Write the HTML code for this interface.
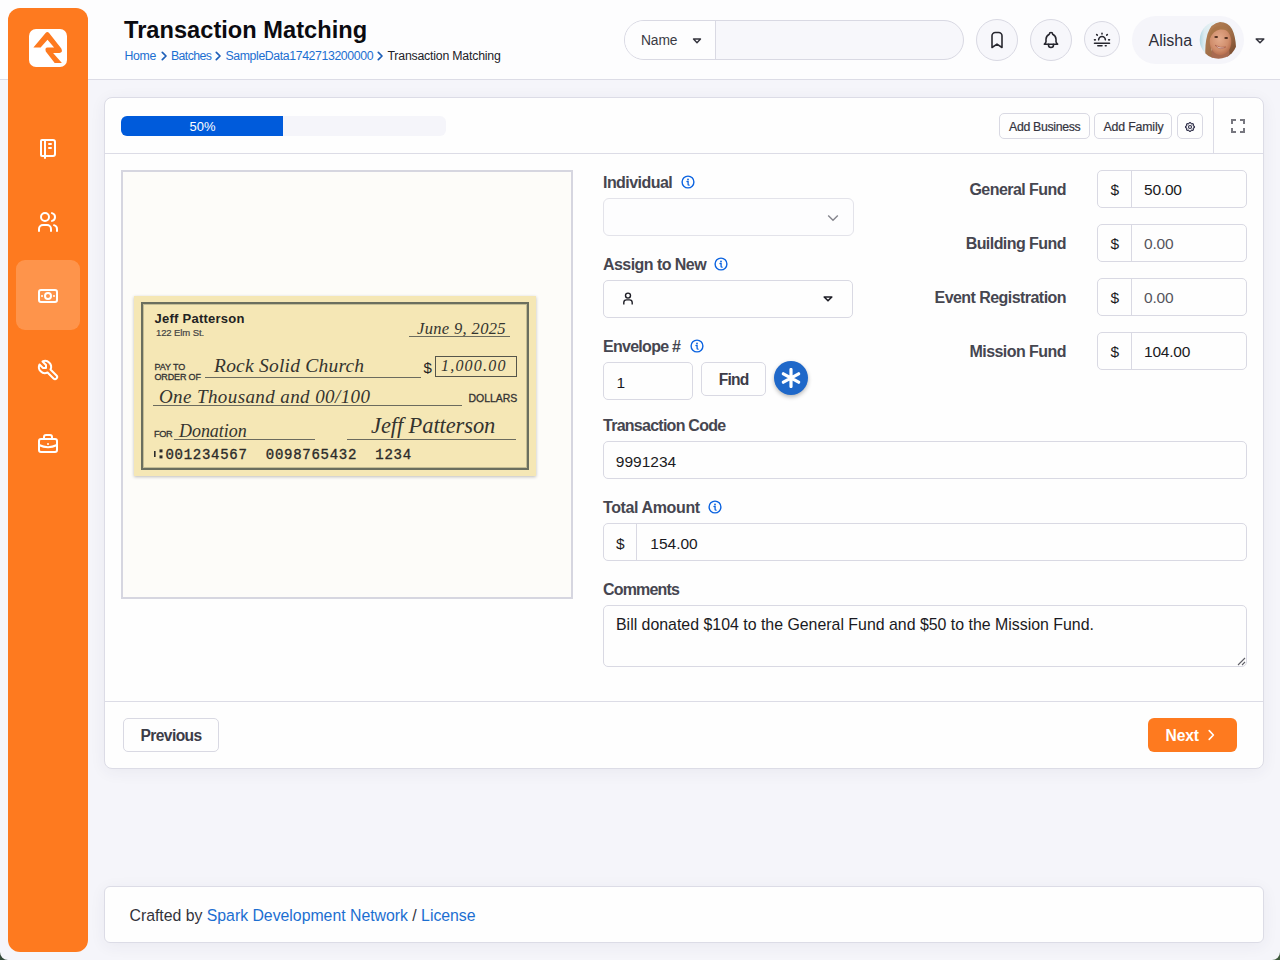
<!DOCTYPE html>
<html><head><meta charset="utf-8"><title>Transaction Matching</title>
<style>
*{box-sizing:border-box;margin:0;padding:0}
html,body{width:1280px;height:960px;overflow:hidden}
body{background:#f5f5fa;font-family:"Liberation Sans",sans-serif;color:#2b2b33;position:relative}
.a{position:absolute}
.t{position:absolute;line-height:1;white-space:nowrap}
</style></head><body>
<div class="a" style="left:0px;top:0px;width:1280px;height:80px;background:#fdfdfe;border-bottom:1px solid #dcdce6"></div>
<div class="a" style="left:8px;top:8px;width:80px;height:944px;background:#fe7a1f;border-radius:12px"></div>
<svg class="a" style="left:29px;top:29px;" width="38" height="38" viewBox="0 0 38 38"><rect width="38" height="38" rx="7" fill="#fff"/><path d="M4.4 18.5H11.6L18.5 10.7L25.1 18.5H18.5Q15.6 18.8 16.8 22.4L25.7 34.1H32.9L24.1 24.1H30.4Q34.2 23.8 32.3 19.6L19.9 3.8Q18.2 2.4 16.8 3.8Z" fill="#fe7a1f"/></svg>
<div class="a" style="left:16px;top:260px;width:64px;height:70px;background:rgba(255,255,255,.2);border-radius:9px"></div>
<svg class="a" style="left:36px;top:136px;" width="24" height="24" viewBox="0 0 24 24"><g fill="none" stroke="#fff" stroke-width="2" stroke-linecap="round" stroke-linejoin="round"><path d="M6 4h11a2 2 0 0 1 2 2v12a2 2 0 0 1 -2 2h-11a1 1 0 0 1 -1 -1v-14a1 1 0 0 1 1 -1m3 0v18"/><path d="M13 8l2 0M13 12l2 0"/></g></svg>
<svg class="a" style="left:36px;top:209.5px;" width="24" height="24" viewBox="0 0 24 24"><g fill="none" stroke="#fff" stroke-width="2" stroke-linecap="round" stroke-linejoin="round"><path d="M9 7m-4 0a4 4 0 1 0 8 0a4 4 0 1 0 -8 0"/><path d="M3 21v-2a4 4 0 0 1 4 -4h4a4 4 0 0 1 4 4v2"/><path d="M16 3.13a4 4 0 0 1 0 7.75"/><path d="M21 21v-2a4 4 0 0 0 -3 -3.85"/></g></svg>
<svg class="a" style="left:36px;top:283.5px;" width="24" height="24" viewBox="0 0 24 24"><g fill="none" stroke="#fff" stroke-width="2" stroke-linecap="round" stroke-linejoin="round"><path d="M12 12m-3 0a3 3 0 1 0 6 0a3 3 0 1 0 -6 0"/><path d="M3 6m0 2a2 2 0 0 1 2 -2h14a2 2 0 0 1 2 2v8a2 2 0 0 1 -2 2h-14a2 2 0 0 1 -2 -2z"/><path d="M18 12l.01 0M6 12l.01 0"/></g></svg>
<svg class="a" style="left:36px;top:357.5px;" width="24" height="24" viewBox="0 0 24 24"><g fill="none" stroke="#fff" stroke-width="2" stroke-linecap="round" stroke-linejoin="round"><path d="M7 10h3v-3l-3.5 -3.5a6 6 0 0 1 8 8l6 6a2 2 0 0 1 -3 3l-6 -6a6 6 0 0 1 -8 -8l3.5 3.5"/></g></svg>
<svg class="a" style="left:36px;top:431.5px;" width="24" height="24" viewBox="0 0 24 24"><g fill="none" stroke="#fff" stroke-width="2" stroke-linecap="round" stroke-linejoin="round"><path d="M3 7m0 2a2 2 0 0 1 2 -2h14a2 2 0 0 1 2 2v9a2 2 0 0 1 -2 2h-14a2 2 0 0 1 -2 -2z"/><path d="M8 7v-2a2 2 0 0 1 2 -2h4a2 2 0 0 1 2 2v2"/><path d="M12 12l0 .01"/><path d="M3 13a20 20 0 0 0 18 0"/></g></svg>
<div class="t" style="left:124px;top:18.62px;font-size:23.6px;color:#0b0b10;font-weight:bold;letter-spacing:0.03px;">Transaction Matching</div>
<div class="t" style="left:124.5px;top:49.79px;font-size:12.3px;color:#1c6fd1;letter-spacing:-0.3px;">Home</div>
<svg class="a" style="left:160.5px;top:51px;" width="7" height="10" viewBox="0 0 7 10"><path d="M1.3 1.3L5 5 1.3 8.7" fill="none" stroke="#1d5fb8" stroke-width="1.7" stroke-linejoin="round" stroke-linecap="round"/></svg>
<div class="t" style="left:171px;top:49.79px;font-size:12.3px;color:#1c6fd1;letter-spacing:-0.6px;">Batches</div>
<svg class="a" style="left:215px;top:51px;" width="7" height="10" viewBox="0 0 7 10"><path d="M1.3 1.3L5 5 1.3 8.7" fill="none" stroke="#1d5fb8" stroke-width="1.7" stroke-linejoin="round" stroke-linecap="round"/></svg>
<div class="t" style="left:225.5px;top:49.79px;font-size:12.3px;color:#1c6fd1;letter-spacing:-0.39px;">SampleData1742713200000</div>
<svg class="a" style="left:376.8px;top:51px;" width="7" height="10" viewBox="0 0 7 10"><path d="M1.3 1.3L5 5 1.3 8.7" fill="none" stroke="#1d5fb8" stroke-width="1.7" stroke-linejoin="round" stroke-linecap="round"/></svg>
<div class="t" style="left:387.5px;top:49.79px;font-size:12.3px;color:#222228;letter-spacing:-0.2px;">Transaction Matching</div>
<div class="a" style="left:624px;top:20px;width:340px;height:40px;border:1px solid #d9d9e3;border-radius:20px;background:#f7f7fb"></div>
<div class="a" style="left:625px;top:21px;width:91px;height:38px;background:#fdfdfe;border-right:1px solid #d9d9e3;border-radius:19px 0 0 19px"></div>
<div class="t" style="left:641px;top:33.92px;font-size:13.8px;color:#3a3a44;letter-spacing:-0.1px;">Name</div>
<svg class="a" style="left:692px;top:38px;" width="10" height="6" viewBox="0 0 10 6"><path d="M1.5 1h7L5 4.7z" fill="none" stroke="#33333d" stroke-width="1.4" stroke-linejoin="round"/></svg>
<div class="a" style="left:976px;top:19px;width:42px;height:42px;border:1px solid #d9d9e3;border-radius:50%;background:#f7f7fb"></div>
<svg class="a" style="left:987px;top:30px;" width="20" height="20" viewBox="0 0 24 24"><path d="M18 7v14l-6 -4l-6 4v-14a4 4 0 0 1 4 -4h4a4 4 0 0 1 4 4z" fill="none" stroke="#26262e" stroke-width="1.9" stroke-linecap="round" stroke-linejoin="round"/></svg>
<div class="a" style="left:1030px;top:19px;width:42px;height:42px;border:1px solid #d9d9e3;border-radius:50%;background:#f7f7fb"></div>
<svg class="a" style="left:1041px;top:29.5px;" width="20" height="20" viewBox="0 0 24 24"><g fill="none" stroke="#26262e" stroke-width="1.9" stroke-linecap="round" stroke-linejoin="round"><path d="M10 5a2 2 0 1 1 4 0a7 7 0 0 1 4 6v3a4 4 0 0 0 2 3h-16a4 4 0 0 0 2 -3v-3a7 7 0 0 1 4 -6"/><path d="M9 17v1a3 3 0 0 0 6 0v-1"/></g></svg>
<div class="a" style="left:1084px;top:21px;width:36px;height:36px;border:1px solid #d9d9e3;border-radius:50%;background:#f7f7fb"></div>
<svg class="a" style="left:1092px;top:28.5px;" width="20" height="20" viewBox="0 0 24 24"><path d="M3 13h1M20 13h1M5.6 6.6l.7 .7M18.4 6.6l-.7 .7M8 13a4 4 0 1 1 8 0M3 17h18M7 20h5M16 20h1M12 5v1" fill="none" stroke="#26262e" stroke-width="1.9" stroke-linecap="round" stroke-linejoin="round"/></svg>
<div class="a" style="left:1132px;top:16px;width:112px;height:48px;border-radius:24px;background:#f5f5fa"></div>
<div class="t" style="left:1148.5px;top:33.06px;font-size:16px;color:#2e2e38;">Alisha</div>
<svg class="a" style="left:1196px;top:17px;" width="46" height="46" viewBox="0 0 46 46"><defs><clipPath id="av"><circle cx="22.5" cy="22.9" r="18.8"/></clipPath>
<radialGradient id="fc" cx="45%" cy="40%" r="60%"><stop offset="0" stop-color="#e4ab8c"/><stop offset=".7" stop-color="#d08e6c"/><stop offset="1" stop-color="#b9704f"/></radialGradient>
<linearGradient id="hr" x1="0" y1="0" x2="1" y2="1"><stop offset="0" stop-color="#b98456"/><stop offset=".6" stop-color="#9c6a45"/><stop offset="1" stop-color="#6e4128"/></linearGradient>
<linearGradient id="bg" x1="0" y1="0" x2="1" y2="0"><stop offset="0" stop-color="#8fc6d6"/><stop offset=".18" stop-color="#dcecf1"/><stop offset=".5" stop-color="#eef4f6"/><stop offset="1" stop-color="#f2f6f8"/></linearGradient></defs>
<g clip-path="url(#av)"><rect width="46" height="46" fill="url(#bg)"/>
<path d="M9.5 40Q8.5 28 11.5 17Q15 6 24 5Q32 5 36 12Q39.5 19 40 30Q40.5 38 38 42L30 42Q34 30 33 20L16 20Q14 32 18 42z" fill="url(#hr)"/>
<path d="M16 30L33 30L34 46H15z" fill="#a86a50"/><ellipse cx="24.5" cy="24.5" rx="10.8" ry="13.6" fill="url(#fc)"/>

<path d="M13.5 22Q13.5 10 23 9.3Q32.5 9.3 35.5 18Q31 11.8 24 12.6Q17.5 13.6 13.5 22z" fill="#a97548"/>
<ellipse cx="20.2" cy="20" rx="1.9" ry="1" fill="#4a2a1c"/><ellipse cx="30.2" cy="21" rx="1.9" ry="1" fill="#4a2a1c"/>
<path d="M19 28.2Q24 34 29.8 30Q24.5 31.6 19 28.2z" fill="#fff" stroke="#a85a48" stroke-width=".7"/>
</g></svg>
<svg class="a" style="left:1255px;top:37.5px;" width="10" height="6" viewBox="0 0 10 6"><path d="M1.2 1h7.6L5 4.8z" fill="none" stroke="#33333d" stroke-width="1.5" stroke-linejoin="round"/></svg>
<div class="a" style="left:104px;top:97px;width:1160px;height:672px;background:#fefefe;border:1px solid #dcdce6;border-radius:8px;box-shadow:0 3px 16px rgba(50,50,90,.06)"></div>
<div class="a" style="left:105px;top:153px;width:1158px;height:1px;background:#dcdce6"></div>
<div class="a" style="left:1213px;top:98px;width:1px;height:55px;background:#dcdce6"></div>
<div class="a" style="left:121px;top:116px;width:325px;height:20px;background:#f5f5fa;border-radius:6px;overflow:hidden"></div>
<div class="a" style="left:121px;top:116px;width:162px;height:20px;background:#005bdb;border-radius:6px 0 0 6px"></div>
<div class="t" style="left:189.5px;top:120.00px;font-size:13px;color:#fff;">50%</div>
<div class="a" style="left:999px;top:113px;width:91px;height:26px;border:1px solid #d9d9e3;border-radius:5px;background:#fefefe"></div>
<div class="t" style="left:1009px;top:120.69px;font-size:12.3px;color:#34343e;letter-spacing:-0.32px;-webkit-text-stroke:0.2px #34343e;">Add Business</div>
<div class="a" style="left:1094px;top:113px;width:78px;height:26px;border:1px solid #d9d9e3;border-radius:5px;background:#fefefe"></div>
<div class="t" style="left:1103.5px;top:120.69px;font-size:12.3px;color:#34343e;letter-spacing:-0.15px;-webkit-text-stroke:0.2px #34343e;">Add Family</div>
<div class="a" style="left:1177px;top:113px;width:26px;height:26px;border:1px solid #d9d9e3;border-radius:5px;background:#fefefe"></div>
<svg class="a" style="left:1183.5px;top:120.5px;" width="12" height="12" viewBox="0 0 24 24"><g fill="none" stroke="#30304a" stroke-width="2.3" stroke-linejoin="round"><path d="M10.325 4.317c.426 -1.756 2.924 -1.756 3.35 0a1.724 1.724 0 0 0 2.573 1.066c1.543 -.94 3.31 .826 2.37 2.37a1.724 1.724 0 0 0 1.065 2.572c1.756 .426 1.756 2.924 0 3.35a1.724 1.724 0 0 0 -1.066 2.573c.94 1.543 -.826 3.31 -2.37 2.37a1.724 1.724 0 0 0 -2.572 1.065c-.426 1.756 -2.924 1.756 -3.35 0a1.724 1.724 0 0 0 -2.573 -1.066c-1.543 .94 -3.310 -.826 -2.37 -2.37a1.724 1.724 0 0 0 -1.065 -2.572c-1.756 -.426 -1.756 -2.924 0 -3.350a1.724 1.724 0 0 0 1.066 -2.573c-.94 -1.543 .826 -3.310 2.37 -2.370c1 .608 2.296 .07 2.572 -1.065z"/><circle cx="12" cy="12" r="3"/></g></svg>
<svg class="a" style="left:1231px;top:119px;" width="14" height="14" viewBox="0 0 14 14"><path d="M1 5V1h4M9 1h4v4M13 9v4H9M5 13H1V9" fill="none" stroke="#77777f" stroke-width="2"/></svg>
<div class="a" style="left:121px;top:170px;width:452px;height:429px;border:2px solid #d6d6e0;background:#fdfcf9"></div>
<div class="a" style="left:134px;top:296px;width:402px;height:180px;background:#f5e7b5;box-shadow:0 1px 3px rgba(0,0,0,.25)"></div>
<div class="a" style="left:140.5px;top:301.5px;width:388.5px;height:168.5px;border:2px solid #6b6f5e;box-shadow:inset 0 0 0 1px #c4bd94"></div>
<div class="t" style="left:154.5px;top:311.90px;font-size:13px;color:#222;font-weight:bold;letter-spacing:0.25px;">Jeff Patterson</div>
<div class="t" style="left:156px;top:328.16px;font-size:9.5px;color:#444;letter-spacing:-0.1px;-webkit-text-stroke:0.2px #444;">122 Elm St.</div>
<div class="t" style="left:417px;top:321.03px;font-size:16.5px;color:#34342f;letter-spacing:0.35px;font-family:'Liberation Serif',serif;font-style:italic;">June 9, 2025</div>
<div class="a" style="left:409px;top:336px;width:101px;height:1px;background:#6b6b5e"></div>
<div class="t" style="left:154.5px;top:362.58px;font-size:9px;color:#333;letter-spacing:-0.1px;-webkit-text-stroke:0.3px #333;">PAY TO</div>
<div class="t" style="left:154.5px;top:372.58px;font-size:9px;color:#333;letter-spacing:-0.15px;-webkit-text-stroke:0.3px #333;">ORDER OF</div>
<div class="t" style="left:214px;top:356.49px;font-size:19.5px;color:#34342f;letter-spacing:0.22px;font-family:'Liberation Serif',serif;font-style:italic;">Rock Solid Church</div>
<div class="a" style="left:205px;top:377px;width:216px;height:1px;background:#6b6b5e"></div>
<div class="t" style="left:423.5px;top:360.30px;font-size:15px;color:#222;">$</div>
<div class="a" style="left:435px;top:356px;width:82px;height:21px;border:1px solid #55554a"></div>
<div class="t" style="left:441px;top:358.46px;font-size:16px;color:#34342f;letter-spacing:1.2px;font-family:'Liberation Serif',serif;font-style:italic;">1,000.00</div>
<div class="t" style="left:159px;top:386.92px;font-size:19px;color:#34342f;letter-spacing:0.4px;font-family:'Liberation Serif',serif;font-style:italic;">One Thousand and 00/100</div>
<div class="a" style="left:153px;top:405px;width:309px;height:1px;background:#6b6b5e"></div>
<div class="t" style="left:468.5px;top:392.91px;font-size:10.5px;color:#333;letter-spacing:-0.05px;-webkit-text-stroke:0.3px #333;">DOLLARS</div>
<div class="t" style="left:154px;top:429.71px;font-size:9.2px;color:#333;letter-spacing:-0.4px;-webkit-text-stroke:0.3px #333;">FOR</div>
<div class="t" style="left:179px;top:422.26px;font-size:18px;color:#34342f;letter-spacing:-0.05px;font-family:'Liberation Serif',serif;font-style:italic;">Donation</div>
<div class="a" style="left:174px;top:439px;width:141px;height:1px;background:#6b6b5e"></div>
<div class="t" style="left:371px;top:414.95px;font-size:22.5px;color:#34342f;letter-spacing:-0.1px;font-family:'Liberation Serif',serif;font-style:italic;">Jeff Patterson</div>
<div class="a" style="left:347px;top:439px;width:169px;height:1px;background:#6b6b5e"></div>
<svg class="a" style="left:153px;top:449px;" width="11" height="10" viewBox="0 0 11 10"><rect x="1" y="2" width="1.6" height="6" fill="#2a2a2a"/><rect x="6.5" y="0.4" width="3" height="3" fill="#2a2a2a"/><rect x="6.5" y="6.4" width="3" height="3" fill="#2a2a2a"/></svg>
<div class="t" style="left:165.5px;top:447.95px;font-size:14px;color:#2a2a2a;letter-spacing:0.72px;font-family:'Liberation Mono',monospace;-webkit-text-stroke:0.35px #2a2a2a;">001234567&nbsp;&nbsp;0098765432&nbsp;&nbsp;1234</div>
<div class="t" style="left:603px;top:175.16px;font-size:16px;color:#464650;font-weight:bold;letter-spacing:-0.55px;">Individual</div>
<svg class="a" style="left:681.0px;top:174.5px;" width="14" height="14" viewBox="0 0 14 14"><circle cx="7" cy="7" r="5.9" fill="none" stroke="#0b63e0" stroke-width="1.4"/><path d="M6 6.5H7.1V9.4Q7.1 10.2 8.1 10.2" fill="none" stroke="#0b63e0" stroke-width="1.3" stroke-linecap="round"/><circle cx="7" cy="4.4" r=".9" fill="#0b63e0"/></svg>
<div class="a" style="left:603px;top:198px;width:251px;height:38px;border:1px solid #e3e3ea;border-radius:6px;background:#fdfdfe"></div>
<svg class="a" style="left:826.5px;top:213.7px;" width="12" height="8" viewBox="0 0 12 8"><path d="M1.2 1.5l4.8 4.8 4.8-4.8" fill="none" stroke="#85858d" stroke-width="1.4"/></svg>
<div class="t" style="left:603px;top:257.16px;font-size:16px;color:#464650;font-weight:bold;letter-spacing:-0.55px;">Assign to New</div>
<svg class="a" style="left:714.0px;top:256.5px;" width="14" height="14" viewBox="0 0 14 14"><circle cx="7" cy="7" r="5.9" fill="none" stroke="#0b63e0" stroke-width="1.4"/><path d="M6 6.5H7.1V9.4Q7.1 10.2 8.1 10.2" fill="none" stroke="#0b63e0" stroke-width="1.3" stroke-linecap="round"/><circle cx="7" cy="4.4" r=".9" fill="#0b63e0"/></svg>
<div class="a" style="left:603px;top:280px;width:250px;height:38px;border:1px solid #d9d9e3;border-radius:5px;background:#fefefe"></div>
<svg class="a" style="left:622px;top:291px;" width="12" height="15" viewBox="0 0 12 15"><circle cx="6" cy="4.6" r="2.5" fill="none" stroke="#1e1e26" stroke-width="1.4"/><path d="M1.8 13.6V11.6Q1.8 8.9 4.5 8.9h3Q10.2 8.9 10.2 11.6v2" fill="none" stroke="#1e1e26" stroke-width="1.4"/></svg>
<svg class="a" style="left:823px;top:296.2px;" width="10" height="6" viewBox="0 0 10 6"><path d="M1.2 1h7.6L5 4.8z" fill="none" stroke="#1e1e26" stroke-width="1.6" stroke-linejoin="round"/></svg>
<div class="t" style="left:603px;top:339.16px;font-size:16px;color:#464650;font-weight:bold;letter-spacing:-0.72px;">Envelope #</div>
<svg class="a" style="left:689.5px;top:338.5px;" width="14" height="14" viewBox="0 0 14 14"><circle cx="7" cy="7" r="5.9" fill="none" stroke="#0b63e0" stroke-width="1.4"/><path d="M6 6.5H7.1V9.4Q7.1 10.2 8.1 10.2" fill="none" stroke="#0b63e0" stroke-width="1.3" stroke-linecap="round"/><circle cx="7" cy="4.4" r=".9" fill="#0b63e0"/></svg>
<div class="a" style="left:603px;top:362px;width:90px;height:38px;border:1px solid #d9d9e3;border-radius:5px;background:#fefefe"></div>
<div class="t" style="left:616.5px;top:374.98px;font-size:15.5px;color:#1a1a22;">1</div>
<div class="a" style="left:701px;top:362px;width:65px;height:34px;border:1px solid #d9d9e3;border-radius:5px;background:#fefefe"></div>
<div class="t" style="left:718.7px;top:371.59px;font-size:15.6px;color:#3c3c48;font-weight:bold;letter-spacing:-0.8px;">Find</div>
<div class="a" style="left:774px;top:361px;width:34px;height:34px;border-radius:50%;background:#1f68c9;box-shadow:0 2px 4px rgba(0,0,0,.28)"></div>
<svg class="a" style="left:781px;top:368px;clip-path:inset(0)" width="20" height="20" viewBox="0 0 20 20"><path d="M10 1.5v17M2.4 5.8l15.2 8.4M2.4 14.2l15.2-8.4" stroke="#fff" stroke-width="3.2" stroke-linecap="round"/></svg>
<div class="t" style="left:603px;top:418.16px;font-size:16px;color:#464650;font-weight:bold;letter-spacing:-0.74px;">Transaction Code</div>
<div class="a" style="left:603px;top:441px;width:644px;height:38px;border:1px solid #d9d9e3;border-radius:5px;background:#fefefe"></div>
<div class="t" style="left:615.8px;top:454.08px;font-size:15.5px;color:#1a1a22;">9991234</div>
<div class="t" style="left:603px;top:500.16px;font-size:16px;color:#464650;font-weight:bold;letter-spacing:-0.38px;">Total Amount</div>
<svg class="a" style="left:708.0px;top:499.5px;" width="14" height="14" viewBox="0 0 14 14"><circle cx="7" cy="7" r="5.9" fill="none" stroke="#0b63e0" stroke-width="1.4"/><path d="M6 6.5H7.1V9.4Q7.1 10.2 8.1 10.2" fill="none" stroke="#0b63e0" stroke-width="1.3" stroke-linecap="round"/><circle cx="7" cy="4.4" r=".9" fill="#0b63e0"/></svg>
<div class="a" style="left:603px;top:523px;width:644px;height:38px;border:1px solid #d9d9e3;border-radius:5px;background:#fefefe"></div>
<div class="a" style="left:636px;top:524px;width:1px;height:36px;background:#d9d9e3"></div>
<div class="t" style="left:616px;top:535.68px;font-size:15.5px;color:#1a1a22;">$</div>
<div class="t" style="left:650.3px;top:535.68px;font-size:15.5px;color:#1a1a22;">154.00</div>
<div class="t" style="left:603px;top:582.16px;font-size:16px;color:#464650;font-weight:bold;letter-spacing:-0.84px;">Comments</div>
<div class="a" style="left:603px;top:605px;width:644px;height:62px;border:1px solid #d9d9e3;border-radius:5px;background:#fefefe"></div>
<div class="t" style="left:616px;top:616.54px;font-size:15.9px;color:#1a1a22;">Bill donated $104 to the General Fund and $50 to the Mission Fund.</div>
<svg class="a" style="left:1237px;top:657px;" width="9" height="9" viewBox="0 0 9 9"><path d="M8 1L1 8M8 5L5 8" stroke="#606068" stroke-width="1.1"/></svg>
<div class="t" style="left:866px;top:182.16px;font-size:16px;color:#464650;font-weight:bold;letter-spacing:-0.55px;text-align:right;width:200px;">General Fund</div>
<div class="a" style="left:1097px;top:170px;width:150px;height:38px;border:1px solid #d9d9e3;border-radius:5px;background:#fefefe"></div>
<div class="a" style="left:1131px;top:171px;width:1px;height:36px;background:#d9d9e3"></div>
<div class="t" style="left:1110.5px;top:182.48px;font-size:15.5px;color:#1a1a22;">$</div>
<div class="t" style="left:1144px;top:182.48px;font-size:15.5px;color:#1a1a22;letter-spacing:-0.2px;">50.00</div>
<div class="t" style="left:866px;top:236.16px;font-size:16px;color:#464650;font-weight:bold;letter-spacing:-0.55px;text-align:right;width:200px;">Building Fund</div>
<div class="a" style="left:1097px;top:224px;width:150px;height:38px;border:1px solid #d9d9e3;border-radius:5px;background:#fefefe"></div>
<div class="a" style="left:1131px;top:225px;width:1px;height:36px;background:#d9d9e3"></div>
<div class="t" style="left:1110.5px;top:236.48px;font-size:15.5px;color:#1a1a22;">$</div>
<div class="t" style="left:1144px;top:236.48px;font-size:15.5px;color:#55555d;letter-spacing:-0.2px;">0.00</div>
<div class="t" style="left:866px;top:290.16px;font-size:16px;color:#464650;font-weight:bold;letter-spacing:-0.55px;text-align:right;width:200px;">Event Registration</div>
<div class="a" style="left:1097px;top:278px;width:150px;height:38px;border:1px solid #d9d9e3;border-radius:5px;background:#fefefe"></div>
<div class="a" style="left:1131px;top:279px;width:1px;height:36px;background:#d9d9e3"></div>
<div class="t" style="left:1110.5px;top:290.48px;font-size:15.5px;color:#1a1a22;">$</div>
<div class="t" style="left:1144px;top:290.48px;font-size:15.5px;color:#55555d;letter-spacing:-0.2px;">0.00</div>
<div class="t" style="left:866px;top:344.16px;font-size:16px;color:#464650;font-weight:bold;letter-spacing:-0.55px;text-align:right;width:200px;">Mission Fund</div>
<div class="a" style="left:1097px;top:332px;width:150px;height:38px;border:1px solid #d9d9e3;border-radius:5px;background:#fefefe"></div>
<div class="a" style="left:1131px;top:333px;width:1px;height:36px;background:#d9d9e3"></div>
<div class="t" style="left:1110.5px;top:344.48px;font-size:15.5px;color:#1a1a22;">$</div>
<div class="t" style="left:1144px;top:344.48px;font-size:15.5px;color:#1a1a22;letter-spacing:-0.2px;">104.00</div>
<div class="a" style="left:105px;top:701px;width:1158px;height:1px;background:#dcdce6"></div>
<div class="a" style="left:123px;top:718px;width:96px;height:34px;border:1px solid #d9d9e3;border-radius:5px;background:#fefefe"></div>
<div class="t" style="left:140.5px;top:727.69px;font-size:15.6px;color:#3c3c48;font-weight:bold;letter-spacing:-0.6px;">Previous</div>
<div class="a" style="left:1148px;top:718px;width:89px;height:34px;border-radius:6px;background:#fe7a1f"></div>
<div class="t" style="left:1165.5px;top:727.69px;font-size:15.6px;color:#fff;font-weight:bold;letter-spacing:-0.1px;">Next</div>
<svg class="a" style="left:1207px;top:729px;" width="9" height="12" viewBox="0 0 9 12"><path d="M2.2 1.6L6.4 6 2.2 10.4" fill="none" stroke="#fff" stroke-width="1.6" stroke-linecap="round" stroke-linejoin="round"/></svg>
<div class="a" style="left:104px;top:886px;width:1160px;height:57px;background:#fefefe;border:1px solid #dcdce6;border-radius:6px;box-shadow:0 3px 16px rgba(50,50,90,.06)"></div>
<div class="t" style="left:129.5px;top:907.58px;font-size:15.85px;color:#33333b;letter-spacing:-0.02px;">Crafted by <span style="color:#1c6fd1">Spark Development Network</span> / <span style="color:#1c6fd1">License</span></div>
<svg class="a" style="left:0px;top:952px;" width="8" height="8" viewBox="0 0 8 8"><path d="M0 0A8 8 0 0 0 8 8H0z" fill="#33493a"/></svg>
<svg class="a" style="left:1272px;top:952px;" width="8" height="8" viewBox="0 0 8 8"><path d="M8 0A8 8 0 0 1 0 8H8z" fill="#3f5a3c"/></svg>
</body></html>
